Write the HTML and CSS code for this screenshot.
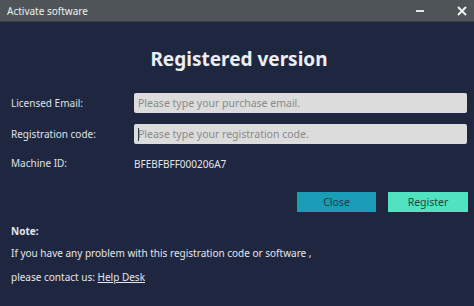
FILE: index.html
```html
<!DOCTYPE html>
<html>
<head>
<meta charset="utf-8">
<link rel="stylesheet" href="styles.css">
</head>
<body>
<div class="window">
  <div class="titlebar">
    <span class="title">Activate software</span>
    <div class="controls">
      <span class="minimize"></span>
      <svg class="close-x" width="10" height="10" viewBox="0 0 10 10"><path d="M1 1 L9 9 M9 1 L1 9" stroke="#f2f2f2" stroke-width="2"/></svg>
    </div>
  </div>
  <div class="content">
    <h1 class="heading">Registered version</h1>
    <div class="form">
      <label class="label">Licensed Email:</label>
      <div class="input">Please type your purchase email.</div>
      <label class="label">Registration code:</label>
      <div class="input focused"><span class="caret"></span>Please type your registration code.</div>
      <label class="label">Machine ID:</label>
      <div class="value">BFEBFBFF000206A7</div>
    </div>
    <div class="actions">
      <button class="btn btn-close">Close</button>
      <button class="btn btn-register">Register</button>
    </div>
    <div class="note">
      <div class="note-title">Note:</div>
      <div class="note-line">If you have any problem with this registration code or software ,</div>
      <div class="note-line">please contact us: <a class="link">Help Desk</a></div>
    </div>
  </div>
</div>
</body>
</html>
```
FILE: styles.css
```css
html, body {
  margin: 0;
  padding: 0;
  background: #1f2740;
}
body {
  width: 474px;
  height: 306px;
  overflow: hidden;
  font-family: "Noto Sans", "Open Sans", sans-serif;
  font-size: 10px;
  color: #e4e6ea;
}
.window {
  width: 474px;
  height: 306px;
  display: flex;
  flex-direction: column;
}
.titlebar {
  height: 21px;
  background: #4e5457;
  border-bottom: 1px solid #3a4048;
  display: flex;
  align-items: center;
  justify-content: space-between;
  padding: 0 7px 0 7px;
}
.title {
  color: #eef0f0;
  font-size: 10px;
}
.controls {
  display: flex;
  align-items: center;
  gap: 33px;
}
.minimize {
  width: 8px;
  height: 2px;
  background: #e6e6e6;
  margin-top: 1px;
}
.close-x {
  display: block;
}
.content {
  flex: 1;
  padding: 0 7px 0 11px;
}
.heading {
  margin: 23px 0 0 0;
  text-align: center;
  font-size: 19px;
  font-weight: bold;
  color: #eceef2;
  line-height: 28px;
}
.form {
  margin-top: 20px;
  display: grid;
  grid-template-columns: 123px 333px;
  row-gap: 11px;
  align-items: center;
}
.label {
  color: #dfe2e8;
}
.input {
  height: 20px;
  box-sizing: border-box;
  background: #dcdcdc;
  border-radius: 2px;
  color: #8a8a8a;
  line-height: 20px;
  padding-left: 4px;
  font-size: 10.5px;
}
.caret {
  display: inline-block;
  width: 1px;
  height: 13px;
  background: #333;
  vertical-align: -3px;
  margin-right: -1px;
}
.value {
  color: #e4e6ea;
  margin-top: 2px;
}
.actions {
  margin-top: 21px;
  margin-right: -1px;
  display: flex;
  justify-content: flex-end;
  gap: 12px;
}
.btn {
  width: 79px;
  height: 20px;
  border: none;
  font-family: "Noto Sans", "Open Sans", sans-serif;
  font-size: 10.5px;
  padding: 0;
  color: #1d3f4a;
}
.btn-register {
  width: 80px;
}
.btn-close {
  background: #1a9bb6;
}
.btn-register {
  background: #50e2c1;
  color: #1e4a40;
}
.note {
  margin-top: 9px;
}
.note-title {
  font-weight: bold;
  line-height: 20px;
}
.note-line {
  line-height: 24px;
}
.link {
  text-decoration: underline;
  color: #e4e6ea;
}
```
